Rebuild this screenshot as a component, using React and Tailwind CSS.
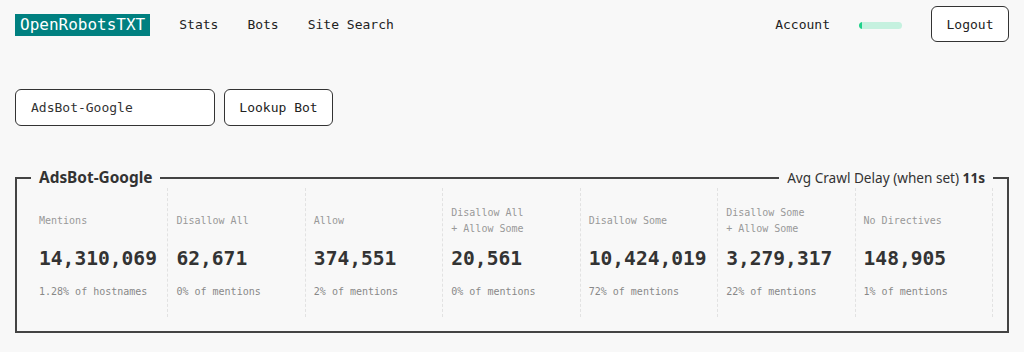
import React from "react";

const stats = [
  { label: ["Mentions"], value: "14,310,069", sub: "1.28% of hostnames" },
  { label: ["Disallow All"], value: "62,671", sub: "0% of mentions" },
  { label: ["Allow"], value: "374,551", sub: "2% of mentions" },
  { label: ["Disallow All", "+ Allow Some"], value: "20,561", sub: "0% of mentions" },
  { label: ["Disallow Some"], value: "10,424,019", sub: "72% of mentions" },
  { label: ["Disallow Some", "+ Allow Some"], value: "3,279,317", sub: "22% of mentions" },
  { label: ["No Directives"], value: "148,905", sub: "1% of mentions" },
];

export default function App() {
  return (
    <div className="min-h-[352px] bg-[#f8f8f8] px-[15px] text-[#222] font-['DejaVu_Sans_Mono',monospace]">
      <header className="flex items-center py-[6px]">
        <div className="bg-[#008080] text-white text-[16px] leading-[22px] px-[5px] h-[22px] mt-[2px]">
          OpenRobotsTXT
        </div>
        <nav className="flex items-center gap-[29px] ml-[29px] text-[13px] mt-[2px]">
          <span>Stats</span>
          <span>Bots</span>
          <span>Site Search</span>
        </nav>
        <div className="ml-auto flex items-center gap-[29px] text-[13px]">
          <span className="mt-[2px]">Account</span>
          <div className="w-[43px] h-[7px] rounded-full bg-[#c5f1df] overflow-hidden mt-[2px]">
            <div className="w-[3px] h-full bg-[#1fd18a] rounded-l-full" />
          </div>
          <button className="h-[36px] w-[78px] border border-[#333] rounded-[6px] bg-white text-[13px] text-[#222] pt-[1px]">
            Logout
          </button>
        </div>
      </header>

      <div className="flex gap-[9px] mt-[41px]">
        <div className="w-[200px] h-[37px] border border-[#333] rounded-[6px] bg-white flex items-center pl-[15px] text-[13px] text-[#333]">
          AdsBot-Google
        </div>
        <button className="w-[109px] h-[37px] border border-[#333] rounded-[6px] bg-white text-[13px] text-[#222]">
          Lookup Bot
        </button>
      </div>

      <fieldset className="mt-[42px] border-2 border-[#444] px-[14px] pb-[14px]">
        <legend className="w-full flex items-center h-[20px]">
          <span className="px-2 text-[15.4px] font-bold leading-[20px] text-[#333] font-['Noto_Sans',sans-serif]">
            AdsBot-Google
          </span>
          <div className="flex-1 h-[2px] bg-[#444]" />
          <span className="px-2 text-[13.6px] leading-[20px] text-[#333] font-['Noto_Sans',sans-serif]">
            Avg Crawl Delay (when set) <b>11s</b>
          </span>
        </legend>
        <div className="grid grid-cols-7">
          {stats.map((s, i) => (
            <div
              key={i}
              className="border-r border-dashed border-[#e2e2e2] pl-2 pt-[17px] h-[129px]"
            >
              <div className="h-[32px] flex flex-col justify-center text-[10px] leading-[16px] text-[#999]">
                {s.label.map((l, j) => (
                  <div key={j} className="whitespace-pre">{l}</div>
                ))}
              </div>
              <div className="mt-[8px] text-[19.6px] leading-[28px] font-bold text-[#333] whitespace-nowrap">
                {s.value}
              </div>
              <div className="mt-[11px] text-[10px] leading-[16px] text-[#888] whitespace-nowrap">
                {s.sub}
              </div>
            </div>
          ))}
        </div>
      </fieldset>
    </div>
  );
}
